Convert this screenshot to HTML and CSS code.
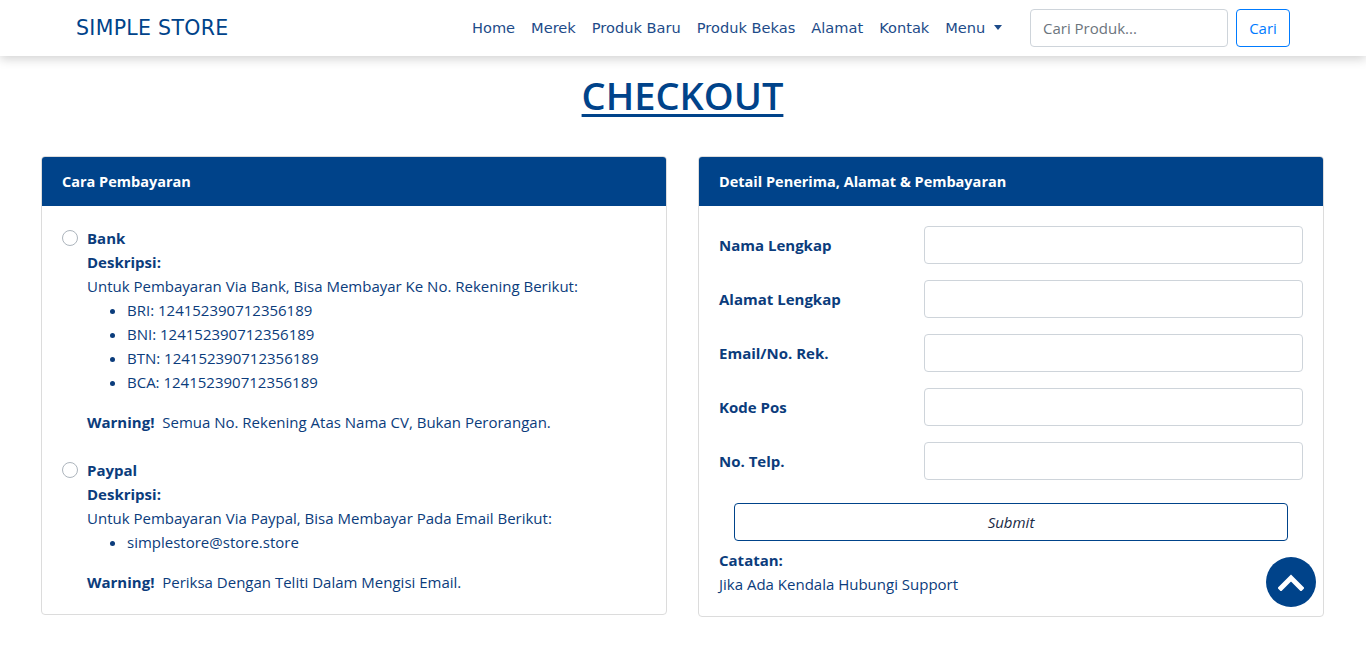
FILE: index.html
```html
<!DOCTYPE html>
<html lang="id">
<head>
<meta charset="utf-8">
<title>Checkout - Simple Store</title>
<link rel="stylesheet" href="styles.css">
</head>
<body>
<nav class="navbar">
  <a class="brand" href="#">SIMPLE STORE</a>
  <div class="nav-right">
    <ul class="nav-links">
      <li><a href="#">Home</a></li>
      <li><a href="#">Merek</a></li>
      <li><a href="#">Produk Baru</a></li>
      <li><a href="#">Produk Bekas</a></li>
      <li><a href="#">Alamat</a></li>
      <li><a href="#">Kontak</a></li>
      <li><a href="#" class="dropdown">Menu <span class="caret"></span></a></li>
    </ul>
    <form class="search">
      <input type="text" class="search-input" placeholder="Cari Produk...">
      <button type="button" class="search-btn">Cari</button>
    </form>
  </div>
</nav>

<main class="page">
  <h1 class="title">CHECKOUT</h1>
  <div class="cards">
    <section class="card">
      <div class="card-header">Cara Pembayaran</div>
      <div class="card-body">
        <div class="pay-option">
          <span class="radio"></span>
          <div class="pay-content">
            <div class="pay-name">Bank</div>
            <div class="bold">Deskripsi:</div>
            <div>Untuk Pembayaran Via Bank, Bisa Membayar Ke No. Rekening Berikut:</div>
            <ul class="list">
              <li>BRI: 124152390712356189</li>
              <li>BNI: 124152390712356189</li>
              <li>BTN: 124152390712356189</li>
              <li>BCA: 124152390712356189</li>
            </ul>
            <div><span class="bold">Warning!</span>&nbsp; Semua No. Rekening Atas Nama CV, Bukan Perorangan.</div>
          </div>
        </div>
        <div class="pay-option second">
          <span class="radio"></span>
          <div class="pay-content">
            <div class="pay-name">Paypal</div>
            <div class="bold">Deskripsi:</div>
            <div>Untuk Pembayaran Via Paypal, Bisa Membayar Pada Email Berikut:</div>
            <ul class="list">
              <li>simplestore@store.store</li>
            </ul>
            <div><span class="bold">Warning!</span>&nbsp; Periksa Dengan Teliti Dalam Mengisi Email.</div>
          </div>
        </div>
      </div>
    </section>

    <section class="card">
      <div class="card-header">Detail Penerima, Alamat &amp; Pembayaran</div>
      <div class="card-body">
        <form class="form">
          <label class="form-label">Nama Lengkap</label>
          <input class="form-input" type="text">
          <label class="form-label">Alamat Lengkap</label>
          <input class="form-input" type="text">
          <label class="form-label">Email/No. Rek.</label>
          <input class="form-input" type="text">
          <label class="form-label">Kode Pos</label>
          <input class="form-input" type="text">
          <label class="form-label">No. Telp.</label>
          <input class="form-input" type="text">
        </form>
        <div class="submit-wrap"><button type="button" class="submit">Submit</button></div>
        <div class="bold">Catatan:</div>
        <div>Jika Ada Kendala Hubungi Support</div>
      </div>
    </section>
  </div>
</main>

<a href="#" class="to-top" aria-label="Ke atas">
  <svg width="26" height="18" viewBox="0 0 26 18"><path d="M3 15 L13 5 L23 15" fill="none" stroke="#fff" stroke-width="5" stroke-linecap="square"/></svg>
</a>
</body>
</html>
```

FILE: styles.css
```css
* { box-sizing: border-box; }
html, body { margin: 0; padding: 0; }
body {
  font-family: "Open Sans", "Noto Sans", sans-serif;
  font-size: 15px;
  line-height: 24px;
  color: #0b3c7c;
  background: #fff;
}
a { text-decoration: none; color: inherit; }

.navbar {
  height: 56px;
  display: flex;
  align-items: center;
  justify-content: space-between;
  padding: 0 76px;
  background: #fff;
  box-shadow: 0 3px 10px rgba(0,0,0,0.18);
  position: relative;
  z-index: 2;
}
.brand {
  font-family: "DejaVu Sans", sans-serif;
  font-size: 20.5px;
  letter-spacing: 0.3px;
  color: #00438a;
}
.nav-right { display: flex; align-items: center; }
.nav-links {
  list-style: none; margin: 0; padding: 0;
  display: flex;
}
.nav-links a {
  display: block;
  padding: 0 8px;
  font-family: "DejaVu Sans", sans-serif;
  font-size: 14.6px;
  color: #1d4b89;
}
.caret {
  display: inline-block;
  width: 0; height: 0;
  margin-left: 4px;
  vertical-align: 3px;
  border-left: 4px solid transparent;
  border-right: 4px solid transparent;
  border-top: 5px solid #1d4b89;
}
.search { display: flex; margin-left: 20px; }
.search-input {
  width: 198px; height: 38px;
  border: 1px solid #ced4da;
  border-radius: 4px;
  padding: 0 12px;
  font-family: "Open Sans", sans-serif;
  font-size: 15px;
  color: #495057;
}
.search-input::placeholder { color: #6c757d; }
.search-btn {
  margin-left: 8px;
  height: 38px; width: 54px;
  border: 1px solid #007bff;
  border-radius: 4px;
  background: #fff;
  color: #007bff;
  font-family: "Open Sans", sans-serif;
  font-size: 15px;
}

.page { padding: 0 42px 40px 41px; }
.title {
  margin: 16px 0 38px;
  text-align: center;
  font-size: 38px;
  line-height: 46px;
  font-weight: 600;
  color: #00438a;
  text-decoration: underline;
  text-decoration-thickness: 3px;
  text-underline-offset: 4px;
}
.cards {
  display: grid;
  grid-template-columns: 1fr 1fr;
  column-gap: 31px;
  align-items: start;
}
.card {
  border: 1px solid #dcdcdc;
  border-radius: 4px;
  overflow: hidden;
}
.card-header {
  height: 49px;
  background: #00438a;
  color: #fff;
  font-weight: 700;
  font-size: 14.5px;
  padding: 0 20px;
  display: flex;
  align-items: center;
}
.card-body { padding: 20px; }
.bold { font-weight: 700; }

.pay-option { display: flex; align-items: flex-start; }
.pay-option.second { margin-top: 24px; }
.radio {
  width: 16px; height: 16px;
  border: 1px solid #adb5bd;
  border-radius: 50%;
  margin-top: 4px;
  margin-right: 9px;
  flex: none;
  background: #fff;
}
.pay-name { font-weight: 700; }
.list {
  margin: 0 0 16px;
  padding-left: 40px;
  list-style: disc;
}

.form {
  display: grid;
  grid-template-columns: 185px 1fr;
  column-gap: 20px;
  row-gap: 16px;
  align-items: center;
}
.form-label { font-weight: 700; }
.form-input {
  height: 38px;
  border: 1px solid #ced4da;
  border-radius: 4px;
  padding: 0 12px;
}
.submit-wrap { padding: 23px 15px 7px; }
.submit {
  width: 100%;
  height: 38px;
  background: #fff;
  border: 1px solid #00438a;
  border-radius: 4px;
  font-family: "Open Sans", sans-serif;
  font-style: italic;
  font-size: 15px;
  color: #1a2a44;
}

.to-top {
  position: fixed;
  left: 1266px;
  top: 557px;
  width: 50px; height: 50px;
  border-radius: 50%;
  background: #00438a;
  display: flex;
  align-items: center;
  justify-content: center;
}
```
